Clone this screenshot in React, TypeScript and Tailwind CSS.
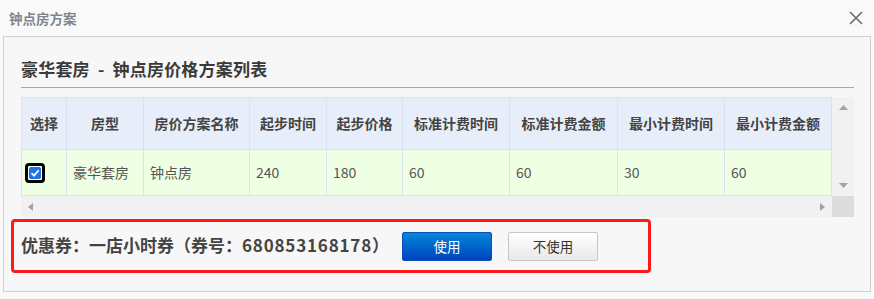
import React from "react";

const cols = [45, 77, 106, 77, 76, 107, 108, 107, 107];
const heads = ["选择", "房型", "房价方案名称", "起步时间", "起步价格", "标准计费时间", "标准计费金额", "最小计费时间", "最小计费金额"];
const row = ["豪华套房", "钟点房", "240", "180", "60", "60", "30", "60"];

const font = { fontFamily: '"Noto Sans CJK SC", "Liberation Sans", sans-serif' };

const Checkbox = () => (
  <div className="w-[20px] h-[20px] border-[3px] border-black rounded-[4px] bg-white p-px">
    <div className="w-full h-full bg-[#1a73e8] rounded-[2px] flex items-center justify-center">
      <svg width="10" height="10" viewBox="0 0 10 10">
        <path d="M1.5 5.2 L4 7.6 L8.6 2.4" fill="none" stroke="white" strokeWidth="1.8" />
      </svg>
    </div>
  </div>
);

export default function App() {
  return (
    <div className="w-[874px] h-[299px] bg-[#f9f9f9] text-[#444]" style={font}>
      {/* title bar */}
      <div className="h-[36px] flex items-center justify-between pl-[9px] pr-[11px]">
        <span className="text-[13.5px] font-bold text-[#80858b]">钟点房方案</span>
        <svg width="14" height="14" viewBox="0 0 14 14">
          <path d="M1 1 L13 13 M13 1 L1 13" stroke="#6b6b6b" strokeWidth="1.6" />
        </svg>
      </div>

      {/* panel */}
      <div className="ml-[3px] w-[868px] h-[256px] border border-[#cfcfcf] bg-[#f7f7f7] pl-[7px]">
        <div className="ml-[10px] w-[833px] pt-[20px] pb-[6px] border-b border-[#a8a8a8]">
          <h2 className="text-[17px] leading-[24px] font-bold text-[#3a3a3a] tracking-[0.2px]">
            豪华套房&nbsp;&nbsp;-&nbsp;&nbsp;钟点房价格方案列表
          </h2>
        </div>

        <div className="ml-[10px] mt-[9px] flex">
          <div className="w-[811px]">
            <div className="border-l border-t border-[#d9e2ef] flex flex-col">
              <div className="flex h-[52px] bg-[#e8eef9]">
                {heads.map((h, i) => (
                  <div
                    key={h}
                    style={{ width: cols[i] }}
                    className="shrink-0 border-r border-b border-[#d9e2ef] flex items-center justify-center text-[14px] font-bold text-[#444]"
                  >
                    {h}
                  </div>
                ))}
              </div>
              <div className="flex h-[46px] bg-[#eeffe3]">
                <div style={{ width: cols[0] }} className="shrink-0 border-r border-b border-[#d9e2ef] flex items-center pl-[3px]">
                  <Checkbox />
                </div>
                {row.map((c, i) => (
                  <div
                    key={i}
                    style={{ width: cols[i + 1] }}
                    className="shrink-0 border-r border-b border-[#d9e2ef] flex items-center text-[14px] text-[#555] pl-[6px]"
                  >
                    {c}
                  </div>
                ))}
              </div>
            </div>
            {/* horizontal scrollbar */}
            <div className="h-[21px] bg-[#f1f1f1] flex items-center justify-between px-[7px]">
              <svg width="5" height="8" viewBox="0 0 5 8"><path d="M5 0 L0 4 L5 8 Z" fill="#a3a3a3" /></svg>
              <svg width="5" height="8" viewBox="0 0 5 8"><path d="M0 0 L5 4 L0 8 Z" fill="#a3a3a3" /></svg>
            </div>
          </div>
          <div className="w-[22px] flex flex-col">
            <div className="h-[99px] bg-[#f1f1f1] flex flex-col items-center justify-between py-[8px]">
              <svg width="9" height="5" viewBox="0 0 9 5"><path d="M0 5 L4.5 0 L9 5 Z" fill="#a3a3a3" /></svg>
              <svg width="9" height="5" viewBox="0 0 9 5"><path d="M0 0 L4.5 5 L9 0 Z" fill="#a3a3a3" /></svg>
            </div>
            <div className="h-[21px] bg-[#dcdcdc]" />
          </div>
        </div>

        {/* coupon box */}
        <div className="mt-[2px] w-[640px] h-[54px] border-[3px] border-[#ff1a1a] rounded-[4px] flex items-center pl-[7px]">
          <span className="text-[17px] font-bold text-[#444] mb-[3px]">
            优惠券：一店小时券（券号：<span className="tracking-[0.8px]">680853168178</span>）
          </span>
          <button className="ml-auto w-[90px] h-[29px] rounded-[2px] border border-[#0a4fb8] bg-gradient-to-b from-[#0c86d8] to-[#0042bd] text-white text-[13.5px]">
            使用
          </button>
          <button className="ml-[16px] mr-[50px] w-[90px] h-[29px] rounded-[2px] border border-[#c6c6c6] bg-gradient-to-b from-white to-[#e9e9e9] text-[#333] text-[13.5px]">
            不使用
          </button>
        </div>
      </div>
    </div>
  );
}
